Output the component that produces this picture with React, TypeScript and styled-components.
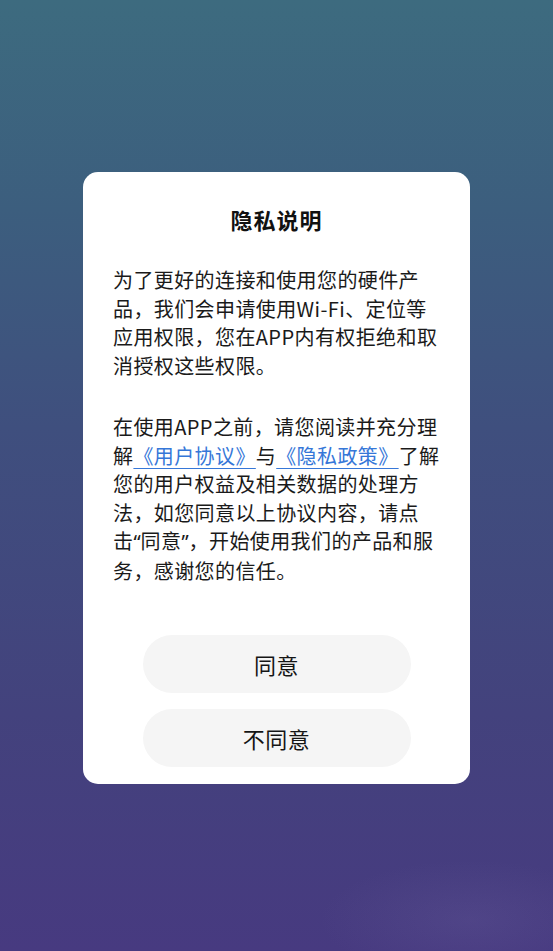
import { FunctionComponent } from "react";
import styled, { createGlobalStyle } from "styled-components";

const GlobalStyle = createGlobalStyle`
	* {
		box-sizing: border-box;
	}

	html, body {
		margin: 0;
		padding: 0;
	}

	body {
		font-family: "Noto Sans CJK SC", "Noto Sans", sans-serif;
		color: #1a1a1a;
	}
`

const Screen = styled.div`
	width: 553px;
	height: 951px;
	overflow: hidden;
	display: flex;
	flex-direction: column;
	align-items: center;
	padding-top: 172px;
	background:
		radial-gradient(ellipse 150px 60px at 470px 920px, rgba(120, 110, 170, 0.18), rgba(120, 110, 170, 0) 100%),
		linear-gradient(180deg, #3d6b7f 0%, #3c5e7e 22%, #3f4f7e 45%, #43427d 75%, #473a80 100%);
`

const Dialog = styled.div`
	width: 387px;
	background: #ffffff;
	border-radius: 15px;
	padding: 32px 30px 17px;
	display: flex;
	flex-direction: column;
`

const Title = styled.h1`
	margin: 0;
	font-size: 22px;
	line-height: 30px;
	font-weight: 700;
	letter-spacing: 1px;
	text-align: center;
	color: #111111;
`

const Body = styled.div`
	margin-top: 32px;
	display: flex;
	flex-direction: column;
	gap: 33px;
`

const Paragraph = styled.p`
	margin: 0;
	font-size: 20px;
	line-height: 28.5px;
	letter-spacing: 0.4px;
	white-space: nowrap;
	color: #1a1a1a;
`

// latin quotes are narrow in the original, not full-width
const Quote = styled.span`
	font-family: "Noto Sans", sans-serif;
	letter-spacing: 0;
`

const Link = styled.a`
	color: #3677d8;
	text-decoration: underline;
	text-decoration-thickness: 1px;
	text-underline-offset: 4px;
	cursor: pointer;
`

const Actions = styled.div`
	margin-top: 50px;
	display: flex;
	flex-direction: column;
	align-items: center;
	gap: 16px;
`

const ActionButton = styled.button`
	width: 268px;
	height: 58px;
	border: none;
	border-radius: 29px;
	background: #f5f5f5;
	font-family: inherit;
	font-size: 22px;
	letter-spacing: 0.5px;
	color: #151515;
	cursor: pointer;
`

const PrivacyDialog: FunctionComponent = () => (
	<Dialog>
		<Title>隐私说明</Title>
		<Body>
			<Paragraph>
				为了更好的连接和使用您的硬件产<br />
				品，我们会申请使用Wi-Fi、定位等<br />
				应用权限，您在APP内有权拒绝和取<br />
				消授权这些权限。
			</Paragraph>
			<Paragraph>
				在使用APP之前，请您阅读并充分理<br />
				解<Link>《用户协议》</Link>与<Link>《隐私政策》</Link>了解<br />
				您的用户权益及相关数据的处理方<br />
				法，如您同意以上协议内容，请点<br />
				击<Quote>“</Quote>同意<Quote>”</Quote>，开始使用我们的产品和服<br />
				务，感谢您的信任。
			</Paragraph>
		</Body>
		<Actions>
			<ActionButton>同意</ActionButton>
			<ActionButton>不同意</ActionButton>
		</Actions>
	</Dialog>
)

export default function App() {
	return (
		<>
			<GlobalStyle />
			<Screen>
				<PrivacyDialog />
			</Screen>
		</>
	)
}
